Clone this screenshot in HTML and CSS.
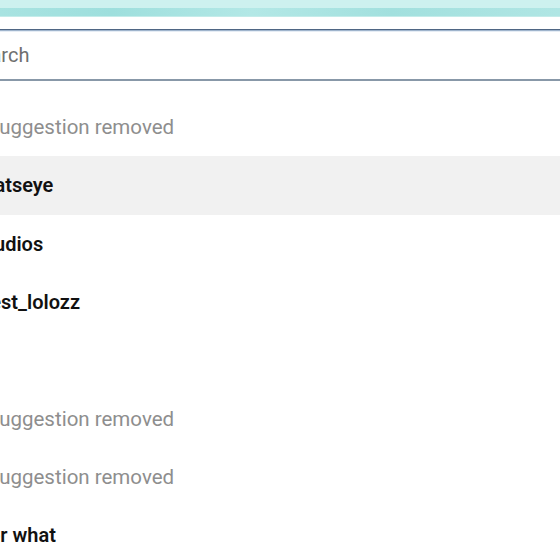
FILE: index.html
```html
<!DOCTYPE html>
<html>
<head>
<meta charset="utf-8">
<link rel="stylesheet" href="styles.css">
</head>
<body>
<div class="banner">
  <div class="banner-light"></div>
  <div class="banner-dark"></div>
</div>
<div class="gap"></div>
<div class="search">
  <span class="placeholder">Search</span>
</div>
<ul class="list">
  <li class="row muted"><span class="label">Suggestion removed</span></li>
  <li class="row active"><span class="label name off-cats">catseye</span></li>
  <li class="row"><span class="label name off-studios">studios</span></li>
  <li class="row"><span class="label name off-best">best_lolozz</span></li>
  <li class="row blank"><span class="label name"></span></li>
  <li class="row muted"><span class="label">Suggestion removed</span></li>
  <li class="row muted"><span class="label">Suggestion removed</span></li>
  <li class="row"><span class="label name off-or">or what</span></li>
</ul>
</body>
</html>
```
FILE: styles.css
```css
html, body {
  margin: 0;
  padding: 0;
  background: #ffffff;
  overflow: hidden;
  width: 560px;
  height: 560px;
}
body {
  font-family: Roboto, "Liberation Sans", sans-serif;
}
.banner {
  display: flex;
  flex-direction: column;
}
.banner-light {
  height: 8px;
  background: #cdf1ef;
}
.banner-dark {
  height: 9px;
  background: linear-gradient(90deg, #a8e3e1 0%, #9edfdd 20%, #b3e8e6 45%, #a2e0de 70%, #b0e6e4 100%);
  border-bottom: 1px solid #c4ecea;
  box-sizing: border-box;
}
.gap {
  height: 12px;
}
.search {
  box-sizing: border-box;
  height: 52px;
  border-top: 1px solid #4f6684;
  box-shadow: inset 0 1px 0 #9fb4cc, inset 0 2px 0 #e6edf5;
  border-bottom: 2px solid #8898a8;
  display: flex;
  align-items: center;
}
.placeholder {
  font-size: 20px;
  color: #6f6f6f;
  margin-left: -32px;
}
.list {
  list-style: none;
  margin: 17px 0 0 0;
  padding: 0;
}
.row {
  height: 58.3px;
  display: flex;
  align-items: center;
}
.row.active {
  background: #f1f1f1;
}
.label {
  font-size: 20.5px;
  margin-left: -13px;
  white-space: nowrap;
}
.muted .label {
  color: #8e8e8e;
}
.name {
  color: #111111;
  font-weight: 600;
  font-size: 20px;
}
.off-cats {
  margin-left: -16px;
}
.off-studios {
  margin-left: -23px;
}
.off-best {
  margin-left: -21px;
}
.off-or {
  margin-left: -11px;
}
```
